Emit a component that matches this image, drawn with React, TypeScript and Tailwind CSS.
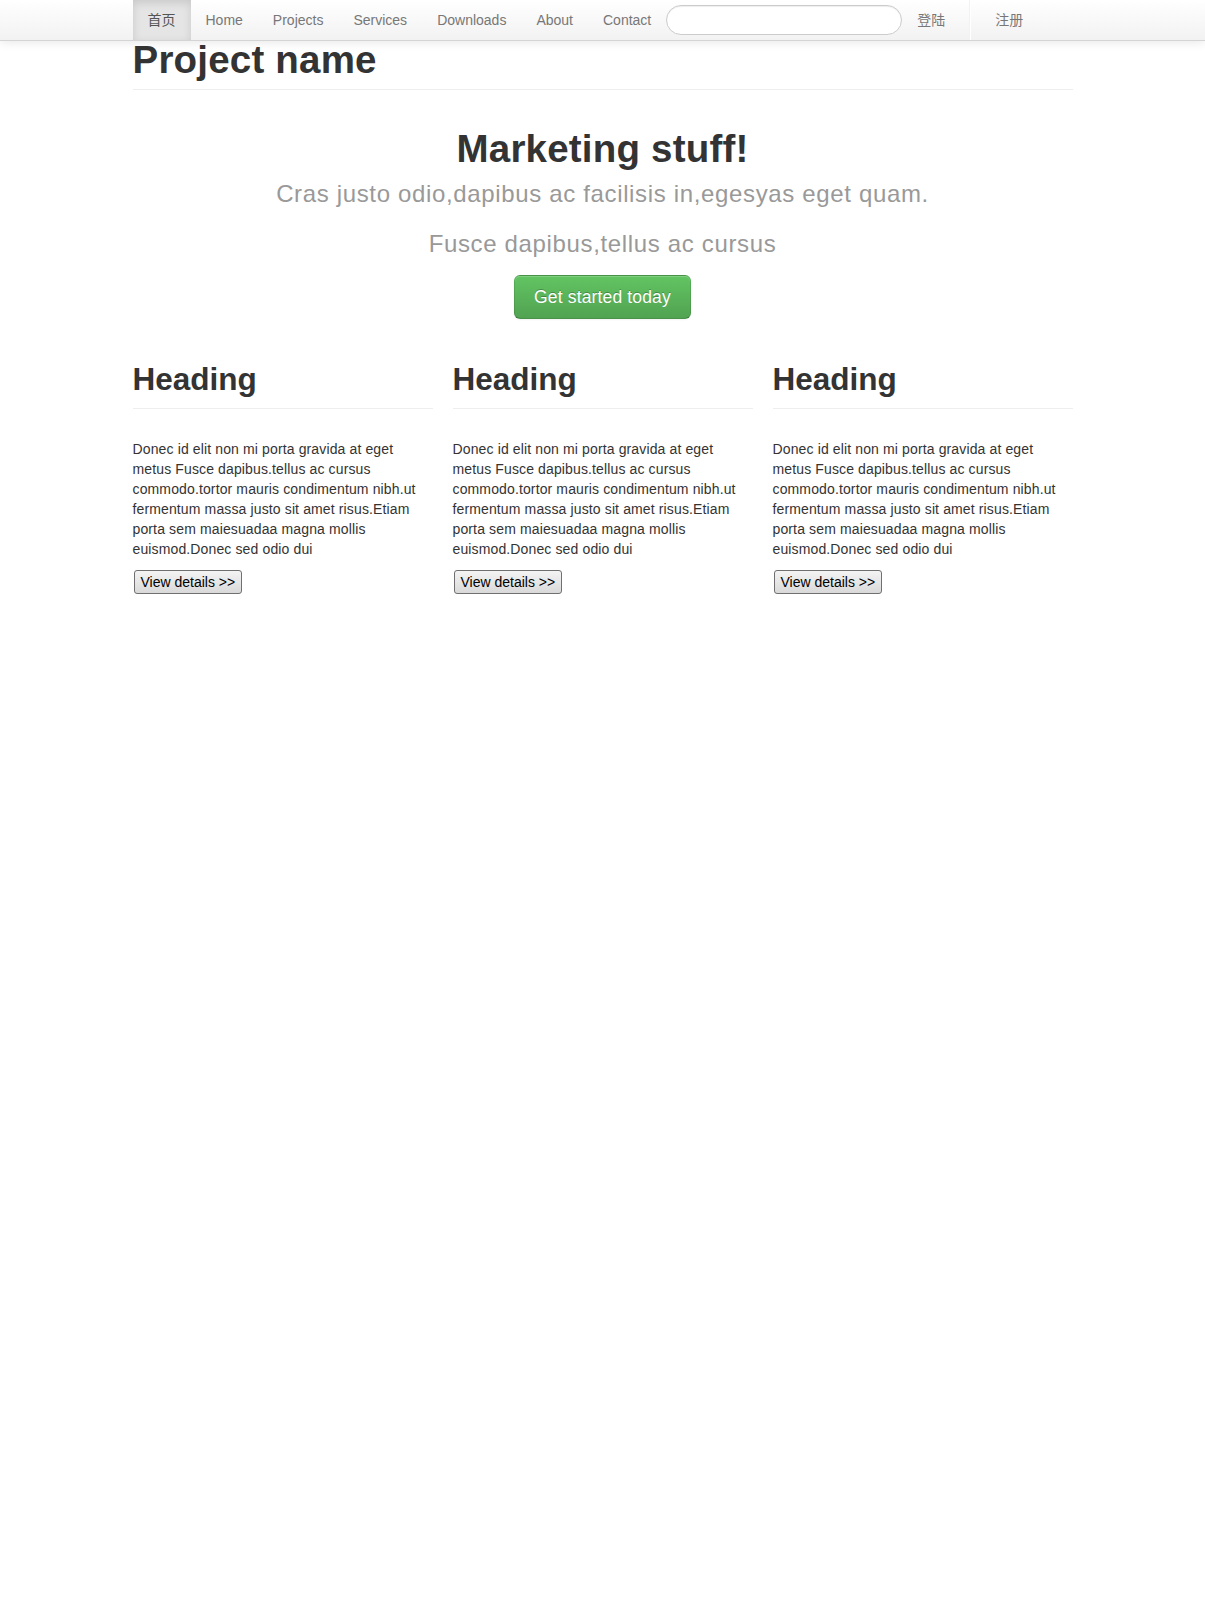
import React from 'react';

const navLinks = ['Home', 'Projects', 'Services', 'Downloads', 'About', 'Contact'];

const body =
  'Donec id elit non mi porta gravida at eget metus Fusce dapibus.tellus ac cursus commodo.tortor mauris condimentum nibh.ut fermentum massa justo sit amet risus.Etiam porta sem maiesuadaa magna mollis euismod.Donec sed odio dui';

const NavLink: React.FC<{ label: string; active?: boolean }> = ({ label, active }) => (
  <a
    href="#"
    className={
      active
        ? 'block h-[40px] px-[15px] leading-[40px] text-[#555] bg-[#e5e5e5] shadow-[inset_0_3px_8px_rgba(0,0,0,0.125)]'
        : 'block h-[40px] px-[15px] leading-[40px] text-[#777]'
    }
  >
    {label}
  </a>
);

const Column: React.FC = () => (
  <div className="w-[300px]">
    <div className="border-b border-[#eee] pb-[9px]">
      <h2 className="text-[31.5px] leading-[40px] font-bold text-[#333]">Heading</h2>
    </div>
    <p className="mt-[30px] w-[286px] tracking-[0.13px]">{body}</p>
    <button
      type="button"
      className="mt-[11px] ml-px h-[24px] px-[6px] rounded-[3px] border border-[#707070] bg-gradient-to-b from-[#f4f4f4] to-[#d9d9d9] text-[14px] leading-[20px] text-black"
    >
      View details &gt;&gt;
    </button>
  </div>
);

export default function App() {
  return (
    <div className="min-h-[1615px] bg-white font-['Liberation_Sans','Noto_Sans_CJK_SC',sans-serif] text-[14px] leading-[20px] text-[#333]">
      {/* 顶部导航 */}
      <nav className="relative z-10 h-[41px] border-b border-[#d4d4d4] bg-gradient-to-b from-white to-[#f2f2f2] shadow-[0_1px_10px_rgba(0,0,0,0.1)]">
        <div className="mx-auto flex w-[940px]">
          <NavLink label="首页" active />
          {navLinks.map((l) => (
            <NavLink key={l} label={l} />
          ))}
          <div className="flex h-[40px] items-center">
            <input
              type="text"
              className="h-[30px] w-[236px] rounded-[15px] border border-[#ccc] bg-white px-[14px] shadow-[inset_0_1px_1px_rgba(0,0,0,0.075)] outline-none"
            />
          </div>
          <NavLink label="登陆" />
          <div className="mx-[9px] h-[40px] border-l border-r border-l-[#f2f2f2] border-r-white" />
          <NavLink label="注册" />
        </div>
      </nav>

      <main className="mx-auto w-[940px] -mt-px">
        <div className="border-b border-[#eee] pb-[9px]">
          <h1 className="text-[38.5px] leading-[40px] font-bold text-[#333] tracking-[0.2px]">Project name</h1>
        </div>

        <section className="mt-[39px] flex flex-col items-center text-center">
          <h1 className="text-[38.5px] leading-[40px] font-bold text-[#333] tracking-[0.2px]">Marketing stuff!</h1>
          <p className="mt-[10px] text-[24px] leading-[30px] text-[#999] tracking-[0.65px]">
            Cras justo odio,dapibus ac facilisis in,egesyas eget quam.
          </p>
          <p className="mt-[20px] text-[24px] leading-[30px] text-[#999] tracking-[0.65px]">
            Fusce dapibus,tellus ac cursus
          </p>
          <a
            href="#"
            className="mt-[16px] block rounded-[6px] border border-[rgba(0,0,0,0.1)] border-b-[rgba(0,0,0,0.25)] bg-gradient-to-b from-[#62c462] to-[#51a351] px-[19px] py-[11px] text-[17.5px] leading-[20px] tracking-[0.15px] text-white [text-shadow:0_-1px_0_rgba(0,0,0,0.25)] shadow-[inset_0_1px_0_rgba(255,255,255,0.2),0_1px_2px_rgba(0,0,0,0.05)]"
          >
            Get started today
          </a>
        </section>

        <section className="mt-[40px] flex gap-[20px]">
          <Column />
          <Column />
          <Column />
        </section>
      </main>
    </div>
  );
}
